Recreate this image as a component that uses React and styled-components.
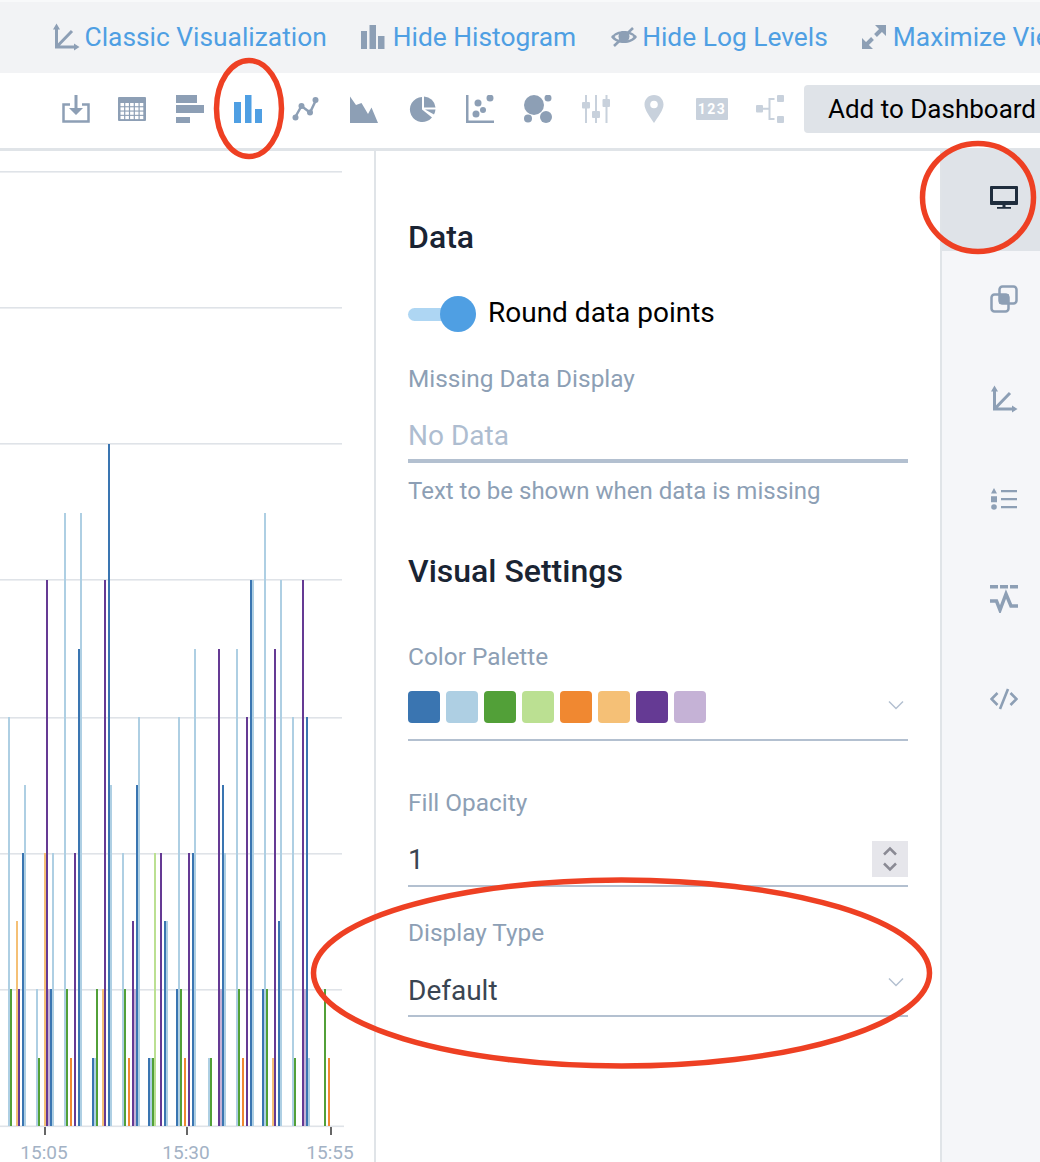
import styled, { createGlobalStyle } from "styled-components";

const BLUE = "#3a75b1";
const LIGHT = "#aecfe3";
const GREEN = "#52a038";
const LGREEN = "#bbe092";
const ORANGE = "#f08831";
const LORANGE = "#f5c076";
const PURPLE = "#653a94";
const LPURPLE = "#c5b2d6";

const PALETTE = [BLUE, LIGHT, GREEN, LGREEN, ORANGE, LORANGE, PURPLE, LPURPLE];
const GRID = [171, 307, 443, 579, 717, 853, 989];

// x position, top of bar, colour
const BARS = [
  [8, 717, LIGHT], [10, 989, GREEN], [16, 921, LORANGE], [18, 989, PURPLE], [22, 853, BLUE], [24, 785, LIGHT],
  [36, 989, LIGHT], [38, 1058, GREEN], [44, 853, LORANGE], [46, 580, PURPLE], [48, 989, LPURPLE], [50, 989, BLUE], [52, 853, LIGHT],
  [64, 513, LIGHT], [66, 989, GREEN], [70, 1058, ORANGE], [74, 853, PURPLE], [78, 649, BLUE], [80, 513, LIGHT],
  [92, 1058, BLUE], [94, 1058, LIGHT], [96, 989, GREEN], [102, 989, LORANGE], [104, 580, PURPLE], [108, 444, BLUE], [110, 785, LIGHT],
  [122, 853, LIGHT], [124, 989, GREEN], [128, 1058, ORANGE], [132, 921, PURPLE], [134, 989, LPURPLE], [136, 785, BLUE], [138, 717, LIGHT],
  [148, 1058, BLUE], [150, 1058, LIGHT], [152, 1058, GREEN], [154, 853, LGREEN], [160, 853, PURPLE], [164, 921, BLUE], [166, 921, LIGHT],
  [176, 989, BLUE], [178, 717, LIGHT], [180, 989, GREEN], [184, 1058, ORANGE], [188, 853, PURPLE],
  [192, 853, BLUE], [194, 649, LIGHT], [208, 1058, LIGHT], [210, 1058, GREEN],
  [218, 649, PURPLE], [220, 989, LPURPLE], [222, 785, BLUE], [224, 853, LIGHT],
  [236, 649, LIGHT], [238, 989, GREEN], [242, 1058, ORANGE], [246, 717, PURPLE], [250, 580, BLUE], [252, 580, LIGHT],
  [262, 989, BLUE], [264, 513, LIGHT], [266, 989, GREEN], [272, 1058, LORANGE], [274, 649, PURPLE], [278, 921, BLUE], [280, 580, LIGHT],
  [292, 717, LIGHT], [294, 1058, GREEN], [302, 580, PURPLE], [304, 989, LPURPLE], [306, 717, BLUE], [308, 1058, LIGHT],
  [324, 989, GREEN], [328, 1058, ORANGE],
];

const TICKS = [
  [45, "15:05"],
  [187, "15:30"],
  [331, "15:55"],
];

const AxisIcon = () => (
  <svg width="28" height="28" viewBox="0 0 28 28" fill="#8d9fb5">
    <path d="M1 6.5 4.5 .5 8 6.5Z M22 20.5 27.5 24 22 27.5Z" />
    <path d="M4.5 5V24H23M5 23.5 20 8" fill="none" stroke="#8d9fb5" strokeWidth="3" />
  </svg>
);

const HistogramIcon = () => (
  <svg width="24" height="24" viewBox="0 0 24 24" fill="#8d9fb5">
    <path d="M0 6h6v18H0zM8.5 0H15v24H8.5zM17 11h6.5v13H17z" />
  </svg>
);

const EyeOffIcon = () => (
  <svg width="26" height="22" viewBox="0 0 26 22">
    <path d="M0 11C6 3 20 3 26 11 20 19 6 19 0 11Z" fill="#8d9fb5" />
    <path d="M3.5 11C8 6 18 6 22.5 11 18 16 8 16 3.5 11Z" fill="#f2f3f5" />
    <circle cx="13" cy="10.5" r="5.5" fill="#8d9fb5" />
    <path d="M3 20 22 2" stroke="#8d9fb5" strokeWidth="2.5" />
  </svg>
);

const MaximizeIcon = () => (
  <svg width="24" height="24" viewBox="0 0 24 24" fill="#8d9fb5">
    <path d="M13 0h11v11ZM0 13v11h11Z" />
    <path d="M19 5 13.5 10.5M5 19l5.5-5.5" stroke="#8d9fb5" strokeWidth="4" />
  </svg>
);

// wider than the others: it sits 2px right of the even icon spacing
const DownloadIcon = () => (
  <svg width="32" height="28" viewBox="-4 0 32 28" fill="#8d9fb5">
    <path d="M8 9.5H1.5V26.5H26.5V9.5H20" fill="none" stroke="#8d9fb5" strokeWidth="2.5" />
    <path d="M12.5 0h3v13H21l-7 7-7-7h5.5Z" />
  </svg>
);

const TableIcon = () => (
  <svg width="28" height="24" viewBox="0 0 28 24">
    <rect width="28" height="24" rx="1" fill="#8d9fb5" />
    {[0, 1, 2, 3].map((r) =>
      [0, 1, 2, 3, 4].map((c) => (
        <rect key={`${r}-${c}`} x={2.5 + c * 4.8} y={6 + r * 4.3} width="3.6" height="3.2" fill="#fff" />
      ))
    )}
  </svg>
);

const RowsIcon = () => (
  <svg width="28" height="28" viewBox="0 0 28 28" fill="#8d9fb5">
    <path d="M0 0h21v8H0zM0 10h28v8H0zM0 22h14v6H0z" />
  </svg>
);

const ColumnsIcon = () => (
  <svg width="28" height="28" viewBox="0 0 28 28" fill="#4f9fe3">
    <path d="M0 7h7v21H0zM11 0h6.5v28H11zM21 14h7v14h-7z" />
  </svg>
);

const LineIcon = () => (
  <svg width="28" height="28" viewBox="0 0 28 28" fill="#8d9fb5">
    <path d="M3 22.5 9.5 11 18 17.5 24 5" fill="none" stroke="#8d9fb5" strokeWidth="2.5" />
    <circle cx="3.5" cy="22.5" r="3" />
    <circle cx="9.5" cy="11" r="3" />
    <circle cx="18" cy="17.5" r="3" />
    <circle cx="23.5" cy="5" r="3" />
  </svg>
);

const AreaIcon = () => (
  <svg width="28" height="28" viewBox="0 0 28 28" fill="#8d9fb5">
    <path d="M0 1.5 6 10 11.5 8 18 19 21.5 12.5 28 28H0Z" />
  </svg>
);

const PieIcon = () => (
  <svg width="28" height="28" viewBox="-1.5 0 28 28" fill="#8d9fb5">
    <path d="M12.5 2A12.5 12.5 0 1 0 22.5 22.5L12.5 14.5Z" />
    <path d="M14.5 1.5A12 12 0 0 1 26 12.5H14.5Z" />
    <path d="M26 14.5A12 12 0 0 1 24.5 19.5L15.5 14.5Z" />
  </svg>
);

const ScatterIcon = () => (
  <svg width="28" height="28" viewBox="0 0 28 28" fill="#8d9fb5">
    <path d="M0 0h2.5v25.5H28V28H0Z" />
    <circle cx="24" cy="3" r="3.5" />
    <circle cx="12" cy="8" r="3.5" />
    <circle cx="17" cy="15" r="3" />
    <circle cx="10" cy="19" r="3.5" />
  </svg>
);

const BubbleIcon = () => (
  <svg width="28" height="28" viewBox="0 0 28 28" fill="#8d9fb5">
    <circle cx="10" cy="10" r="10" />
    <circle cx="24" cy="3" r="3.5" />
    <circle cx="4" cy="23.5" r="4" />
    <circle cx="22" cy="22" r="6" />
  </svg>
);

const SlidersIcon = () => (
  <svg width="28" height="28" viewBox="0 0 28 28" fill="#c8d1dc">
    <path d="M3 0h2v28H3zM13 0h2v28h-2zM23.5 0h2v28h-2z" />
    <rect x="0" y="7" width="8" height="6.5" rx="1" />
    <rect x="10" y="16" width="8" height="7" rx="1" />
    <rect x="20.5" y="4" width="7.5" height="8" rx="1" />
  </svg>
);

const PinIcon = () => (
  <svg width="20" height="28" viewBox="0 0 20 28">
    <path d="M10 0C4.5 0 .5 4.2 .5 9.5 .5 15 6 22 10 28 14 22 19.5 15 19.5 9.5 19.5 4.2 15.5 0 10 0Z" fill="#c8d1dc" />
    <circle cx="10" cy="9.5" r="3.8" fill="#fff" />
  </svg>
);

const NumberIcon = () => <NumberBadge>123</NumberBadge>;

const FlowIcon = () => (
  <svg width="28" height="28" viewBox="0 0 28 28" fill="#c8d1dc">
    <rect x="0" y="10" width="7" height="7.5" rx="1" />
    <rect x="21" y="0" width="7" height="7" rx="1" />
    <rect x="21" y="21" width="7" height="7" rx="1" />
    <path d="M7 12.8h7v2H7zM18.5 3v2h-4v18h4v2h-6V3Z" />
  </svg>
);

const MonitorIcon = () => (
  <svg width="28" height="23" viewBox="0 0 28 23">
    <path d="M1 0h26a1 1 0 0 1 1 1v17a1 1 0 0 1-1 1H1a1 1 0 0 1-1-1V1a1 1 0 0 1 1-1Z" fill="#1f2d3d" />
    <rect x="3" y="3" width="22" height="12" fill="#dfe3e8" />
    <path d="M12.5 19h3v2h-3zM7 21h14v1.8H7z" fill="#1f2d3d" />
  </svg>
);

const LayersIcon = () => (
  <svg width="28" height="28" viewBox="0 0 28 28" fill="none" stroke="#8d9fb5" strokeWidth="2.5">
    <rect x="9.5" y="1.5" width="17" height="17" rx="3" />
    <rect x="1.5" y="9.5" width="17" height="17" rx="3" />
    <rect x="9" y="9" width="10" height="10" rx="1" fill="#8d9fb5" stroke="none" />
  </svg>
);

const LegendIcon = () => (
  <svg width="26" height="22" viewBox="0 0 26 22" fill="#8d9fb5">
    <path d="M3 0 6 5.5H0ZM0 8.3h6v6H0zM10 2h16v2.3H10zM10 10h16v2.3H10zM10 18h16v2.3H10z" />
    <circle cx="3" cy="19" r="2.8" />
  </svg>
);

const PulseIcon = () => (
  <svg width="28" height="28" viewBox="0 0 28 28">
    <path d="M0 0h8v3.5H0zM10 0h8v3.5h-8zM20 0h8v3.5h-8z" fill="#8d9fb5" />
    <path d="M0 16h6.5L10 25l6-16 5 12h7" fill="none" stroke="#8d9fb5" strokeWidth="3.5" />
  </svg>
);

const CodeIcon = () => (
  <svg width="28" height="22" viewBox="0 0 28 22" fill="none" stroke="#8d9fb5" strokeWidth="2.6">
    <path d="M7.5 5 1.5 11 7.5 17M20.5 5l6 6-6 6M18 1 10 21" />
  </svg>
);

const NAV = [
  { Icon: AxisIcon, label: "Classic Visualization", gap: 4.5 },
  { Icon: HistogramIcon, label: "Hide Histogram", gap: 7.5 },
  { Icon: EyeOffIcon, label: "Hide Log Levels", gap: 5.5 },
  { Icon: MaximizeIcon, label: "Maximize View", gap: 6.5 },
];

const TOOLS = [
  DownloadIcon, TableIcon, RowsIcon, ColumnsIcon, LineIcon, AreaIcon, PieIcon,
  ScatterIcon, BubbleIcon, SlidersIcon, PinIcon, NumberIcon, FlowIcon,
];

const TABS = [MonitorIcon, LayersIcon, AxisIcon, LegendIcon, PulseIcon, CodeIcon];

const App = () => {
  return (
    <Page>
      <GlobalStyle />
      <TopBar>
        {NAV.map(({ Icon, label, gap }) => (
          <NavItem key={label} $gap={gap}>
            <Icon />
            <NavLabel>{label}</NavLabel>
          </NavItem>
        ))}
      </TopBar>
      <Toolbar>
        {TOOLS.map((Tool, i) => (
          <ToolSlot key={i}>
            <Tool />
          </ToolSlot>
        ))}
        <DashboardButton>Add to Dashboard</DashboardButton>
      </Toolbar>
      <Body>
        <ChartPane>
          <svg width="374" height="1011" viewBox="0 151 374 1011">
            {GRID.map((y) => (
              <rect key={y} x="0" y={y} width="342" height="1.6" fill="#dfe3e8" />
            ))}
            <rect x="0" y="1125.5" width="344" height="1.6" fill="#dfe3e8" />
            {BARS.map(([x, top, color]) => (
              <rect key={`${x}-${top}`} x={x} y={top} width="2" height={1126 - top} fill={color} />
            ))}
            {TICKS.map(([x, label]) => (
              <g key={label}>
                <rect x={x - 1} y="1127" width="2" height="8" fill="#666" />
                <text x={x - 1} y="1159" textAnchor="middle" fontFamily="Roboto" fontSize="19" fill="#a3b2c5">
                  {label}
                </text>
              </g>
            ))}
          </svg>
        </ChartPane>
        <Settings>
          <DataHeading>Data</DataHeading>
          <ToggleRow>
            <Toggle>
              <Knob />
            </Toggle>
            <ToggleLabel>Round data points</ToggleLabel>
          </ToggleRow>
          <MissingLabel>Missing Data Display</MissingLabel>
          <Placeholder>No Data</Placeholder>
          <HelpText>Text to be shown when data is missing</HelpText>
          <VisualHeading>Visual Settings</VisualHeading>
          <PaletteLabel>Color Palette</PaletteLabel>
          <PaletteField>
            <Swatches>
              {PALETTE.map((color) => (
                <Swatch key={color} $color={color} />
              ))}
            </Swatches>
            <ChevronMark $lift={4} width="16" height="10" viewBox="0 0 16 10">
              <path d="M1 1.5 8 8.5 15 1.5" />
            </ChevronMark>
          </PaletteField>
          <OpacityLabel>Fill Opacity</OpacityLabel>
          <OpacityField>
            <FieldValue>1</FieldValue>
            <Spinner>
              <svg width="16" height="26" viewBox="0 0 16 26" fill="none" stroke="#8a8a94" strokeWidth="2.5">
                <path d="M2 8.5 8 2.5l6 6M2 17.5l6 6 6-6" />
              </svg>
            </Spinner>
          </OpacityField>
          <TypeLabel>Display Type</TypeLabel>
          <TypeField>
            <FieldValue>Default</FieldValue>
            <ChevronMark $lift={18} width="16" height="10" viewBox="0 0 16 10">
              <path d="M1 1.5 8 8.5 15 1.5" />
            </ChevronMark>
          </TypeField>
        </Settings>
        <SideTabs>
          {TABS.map((Tab, i) => (
            <SideTab key={i} $active={i === 0}>
              <Tab />
            </SideTab>
          ))}
        </SideTabs>
      </Body>
      <Annotations width="1040" height="1162" viewBox="0 0 1040 1162" fill="none" stroke="#ee4023" strokeWidth="5.5">
        <ellipse cx="249" cy="108.5" rx="32.5" ry="48" />
        <ellipse cx="978" cy="197.5" rx="55.5" ry="54" />
        <ellipse cx="621.5" cy="973" rx="308" ry="93" />
      </Annotations>
    </Page>
  );
};

const GlobalStyle = createGlobalStyle`
  body {
    margin: 0;
    background: #fff;
    font-family: Roboto, "Liberation Sans", sans-serif;
  }
`;

const Page = styled.div`
  position: relative;
  width: 1040px;
  height: 1162px;
  overflow: hidden;
  background: #fff;
`;

const TopBar = styled.div`
  display: flex;
  align-items: center;
  gap: 34.5px;
  height: 73px;
  padding: 0 0 2px 52px;
  box-sizing: border-box;
  background: #f2f3f5;
  border-top: 2px solid #f8f9fa;
`;

const NavItem = styled.div`
  display: flex;
  align-items: center;
  flex-shrink: 0;
  gap: ${({ $gap }) => $gap}px;
`;

const NavLabel = styled.span`
  color: #4f9fe3;
  font-size: 26.35px;
  white-space: nowrap;
`;

const Toolbar = styled.div`
  display: flex;
  align-items: center;
  height: 78px;
  padding: 0 0 3px 45px;
  box-sizing: border-box;
  border-bottom: 3px solid #e0e4e8;
  overflow: hidden;
`;

const ToolSlot = styled.div`
  display: flex;
  align-items: center;
  justify-content: center;
  flex-shrink: 0;
  width: 58px;
`;

const NumberBadge = styled.div`
  width: 32px;
  height: 22px;
  background: #c8d1dc;
  border-radius: 1px;
  color: #fff;
  font-size: 14px;
  font-weight: 700;
  line-height: 22px;
  letter-spacing: 1.5px;
  text-align: center;
`;

const DashboardButton = styled.div`
  flex-shrink: 0;
  margin-left: 5px;
  padding: 0 24px;
  height: 48px;
  border-radius: 4px;
  background: #dfe3e8;
  color: #000;
  font-size: 26px;
  line-height: 48px;
  white-space: nowrap;
`;

const Body = styled.div`
  display: flex;
  height: 1011px;
`;

const ChartPane = styled.div`
  flex-shrink: 0;
  width: 374px;
  height: 1011px;
  overflow: hidden;
  border-right: 2px solid #e0e4e8;
`;

const Settings = styled.div`
  flex-shrink: 0;
  width: 500px;
  padding: 0 32px;
`;

const Heading = styled.h2`
  margin: 0;
  color: #1a2433;
  font-size: 32px;
  font-weight: 500;
`;

const DataHeading = styled(Heading)`
  margin-top: 68px;
  line-height: 36px;
`;

const VisualHeading = styled(Heading)`
  margin-top: 46px;
  line-height: 38px;
`;

const ToggleRow = styled.div`
  display: flex;
  align-items: center;
  gap: 12px;
  margin-top: 38px;
  height: 42px;
`;

const Toggle = styled.div`
  position: relative;
  width: 68px;
  height: 13px;
  border-radius: 7px;
  background: #aed6f3;
`;

const Knob = styled.div`
  position: absolute;
  top: -12px;
  right: 0;
  width: 36px;
  height: 36px;
  border-radius: 50%;
  background: #4f9fe3;
`;

const ToggleLabel = styled.span`
  margin-bottom: 4px;
  color: #000;
  font-size: 28px;
  white-space: nowrap;
`;

const FieldLabel = styled.div`
  color: #8d9fb5;
  font-size: 24.4px;
  line-height: 30px;
`;

const MissingLabel = styled(FieldLabel)`
  margin-top: 29px;
`;

const Placeholder = styled.div`
  margin-top: 20px;
  height: 45px;
  border-bottom: 4px solid #b3c0d0;
  color: #aebdd0;
  font-size: 28px;
  line-height: 44px;
`;

const HelpText = styled(FieldLabel)`
  margin-top: 13px;
  font-size: 24px;
`;

const PaletteLabel = styled(FieldLabel)`
  margin-top: 52px;
`;

const OpacityLabel = styled(FieldLabel)`
  margin-top: 47px;
`;

const TypeLabel = styled(FieldLabel)`
  margin-top: 31px;
`;

const PaletteField = styled.div`
  display: flex;
  align-items: center;
  justify-content: space-between;
  margin-top: 19px;
  height: 50px;
  padding: 0 4px 16px 0;
  box-sizing: border-box;
  border-bottom: 2px solid #b3c0d0;
`;

const Swatches = styled.div`
  display: flex;
  gap: 6px;
`;

const Swatch = styled.div`
  width: 32px;
  height: 32px;
  border-radius: 4px;
  background: ${({ $color }) => $color};
`;

const ChevronMark = styled.svg`
  fill: none;
  stroke: #b3c0d0;
  stroke-width: 1.5;
  margin-bottom: ${({ $lift }) => $lift}px;
`;

const OpacityField = styled.div`
  display: flex;
  align-items: center;
  justify-content: space-between;
  margin-top: 23px;
  height: 46px;
  padding-bottom: 8px;
  box-sizing: border-box;
  border-bottom: 2px solid #b3c0d0;
`;

const FieldValue = styled.span`
  color: #3a4552;
  font-size: 28px;
`;

const Spinner = styled.div`
  display: flex;
  align-items: center;
  justify-content: center;
  width: 36px;
  height: 36px;
  background: #e6e6eb;
`;

const TypeField = styled.div`
  display: flex;
  align-items: center;
  justify-content: space-between;
  margin-top: 18px;
  height: 51px;
  padding-right: 4px;
  box-sizing: border-box;
  border-bottom: 2px solid #b3c0d0;
`;

const SideTabs = styled.div`
  flex-shrink: 0;
  width: 98px;
  margin-top: -2px;
  border-left: 2px solid #e0e4e8;
  background: #f5f6f9;
`;

const SideTab = styled.div`
  display: flex;
  align-items: center;
  justify-content: center;
  height: ${({ $active }) => ($active ? 102 : 100)}px;
  padding: 0 0 ${({ $active }) => ($active ? 6 : 5)}px 26px;
  box-sizing: border-box;
  background: ${({ $active }) => ($active ? "#dfe3e8" : "transparent")};
`;

const Annotations = styled.svg`
  position: absolute;
  top: 0;
  left: 0;
  pointer-events: none;
`;

export default App;
